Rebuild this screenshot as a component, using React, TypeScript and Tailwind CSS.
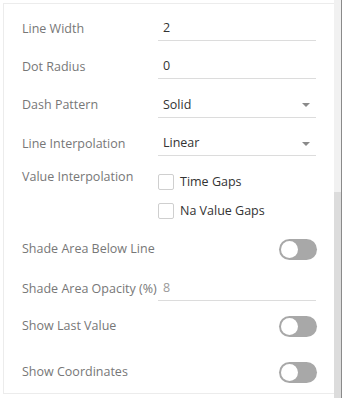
import React from 'react'

const font = { fontFamily: '"Open Sans", "Noto Sans", sans-serif' }

function Label({ children }: { children: React.ReactNode }) {
  return <span className="block w-[136px] shrink-0 text-[12.5px] text-[#777]">{children}</span>
}

function TextRow({ label, value, muted, className = '' }: { label: string; value: string; muted?: boolean; className?: string }) {
  return (
    <div className={`flex h-[38px] items-center ${className}`}>
      <Label>{label}</Label>
      <div
        className={`flex h-[24px] w-[158px] items-center border-b border-[#dcdcdc] pl-[5px] text-[12.5px] ${
          muted ? 'text-[#9a9a9a]' : 'text-[#333]'
        }`}
      >
        {value}
      </div>
    </div>
  )
}

function SelectRow({ label, value, className = '' }: { label: string; value: string; className?: string }) {
  return (
    <div className={`flex items-center ${className}`}>
      <Label>{label}</Label>
      <div className="flex h-[24px] w-[158px] items-center justify-between border-b border-[#dcdcdc] pl-[5px] pr-[6px] text-[12.5px] text-[#333]">
        <span>{value}</span>
        <span className="h-0 w-0 border-x-[4px] border-t-[4px] border-x-transparent border-t-[#8a8a8a]" />
      </div>
    </div>
  )
}

function Checkbox({ label }: { label: string }) {
  return (
    <div className="flex h-[16px] items-center gap-[6px]">
      <span className="h-[16px] w-[16px] rounded-[2px] border border-[#cfcfcf] bg-white" />
      <span className="text-[12.5px] text-[#333]">{label}</span>
    </div>
  )
}

function Toggle() {
  return (
    <span className="flex h-[21px] w-[38px] items-center rounded-full bg-[#a8a8a8] pl-[2px]">
      <span className="h-[17px] w-[17px] rounded-full bg-white" />
    </span>
  )
}

function ToggleRow({ label, className = '' }: { label: string; className?: string }) {
  return (
    <div className={`flex h-[38px] items-center justify-between ${className}`}>
      <Label>{label}</Label>
      <Toggle />
    </div>
  )
}

export default function App() {
  return (
    <div className="flex h-[398px] w-[345px] bg-white" style={font}>
      <div className="ml-[3px] mt-[3px] h-[391px] w-[331px] border-l border-t border-b border-[#ececec] pl-[18px] pr-[17px] pt-[6px]">
        <TextRow label="Line Width" value="2" />
        <TextRow label="Dot Radius" value="0" />
        <SelectRow label="Dash Pattern" value="Solid" className="h-[39px]" />
        <SelectRow label="Line Interpolation" value="Linear" className="h-[38px]" />

        <div className="flex h-[67px]">
          <div className="pt-[5px]">
            <Label>Value Interpolation</Label>
          </div>
          <div className="flex flex-col gap-[13px] pt-[11px]">
            <Checkbox label="Time Gaps" />
            <Checkbox label="Na Value Gaps" />
          </div>
        </div>

        <ToggleRow label="Shade Area Below Line" />
        <TextRow label="Shade Area Opacity (%)" value="8" muted className="mt-[2px]" />
        <ToggleRow label="Show Last Value" className="mt-[-1px]" />
        <ToggleRow label="Show Coordinates" className="mt-[8px]" />
      </div>

      <div className="flex h-full w-[7px] flex-col bg-[#f1f1f1]">
        <div className="mt-[192px] flex-1 bg-[#dcdcdc]" />
      </div>
      <div className="h-full w-[1px] bg-[#8a8a8a]" />
    </div>
  )
}
